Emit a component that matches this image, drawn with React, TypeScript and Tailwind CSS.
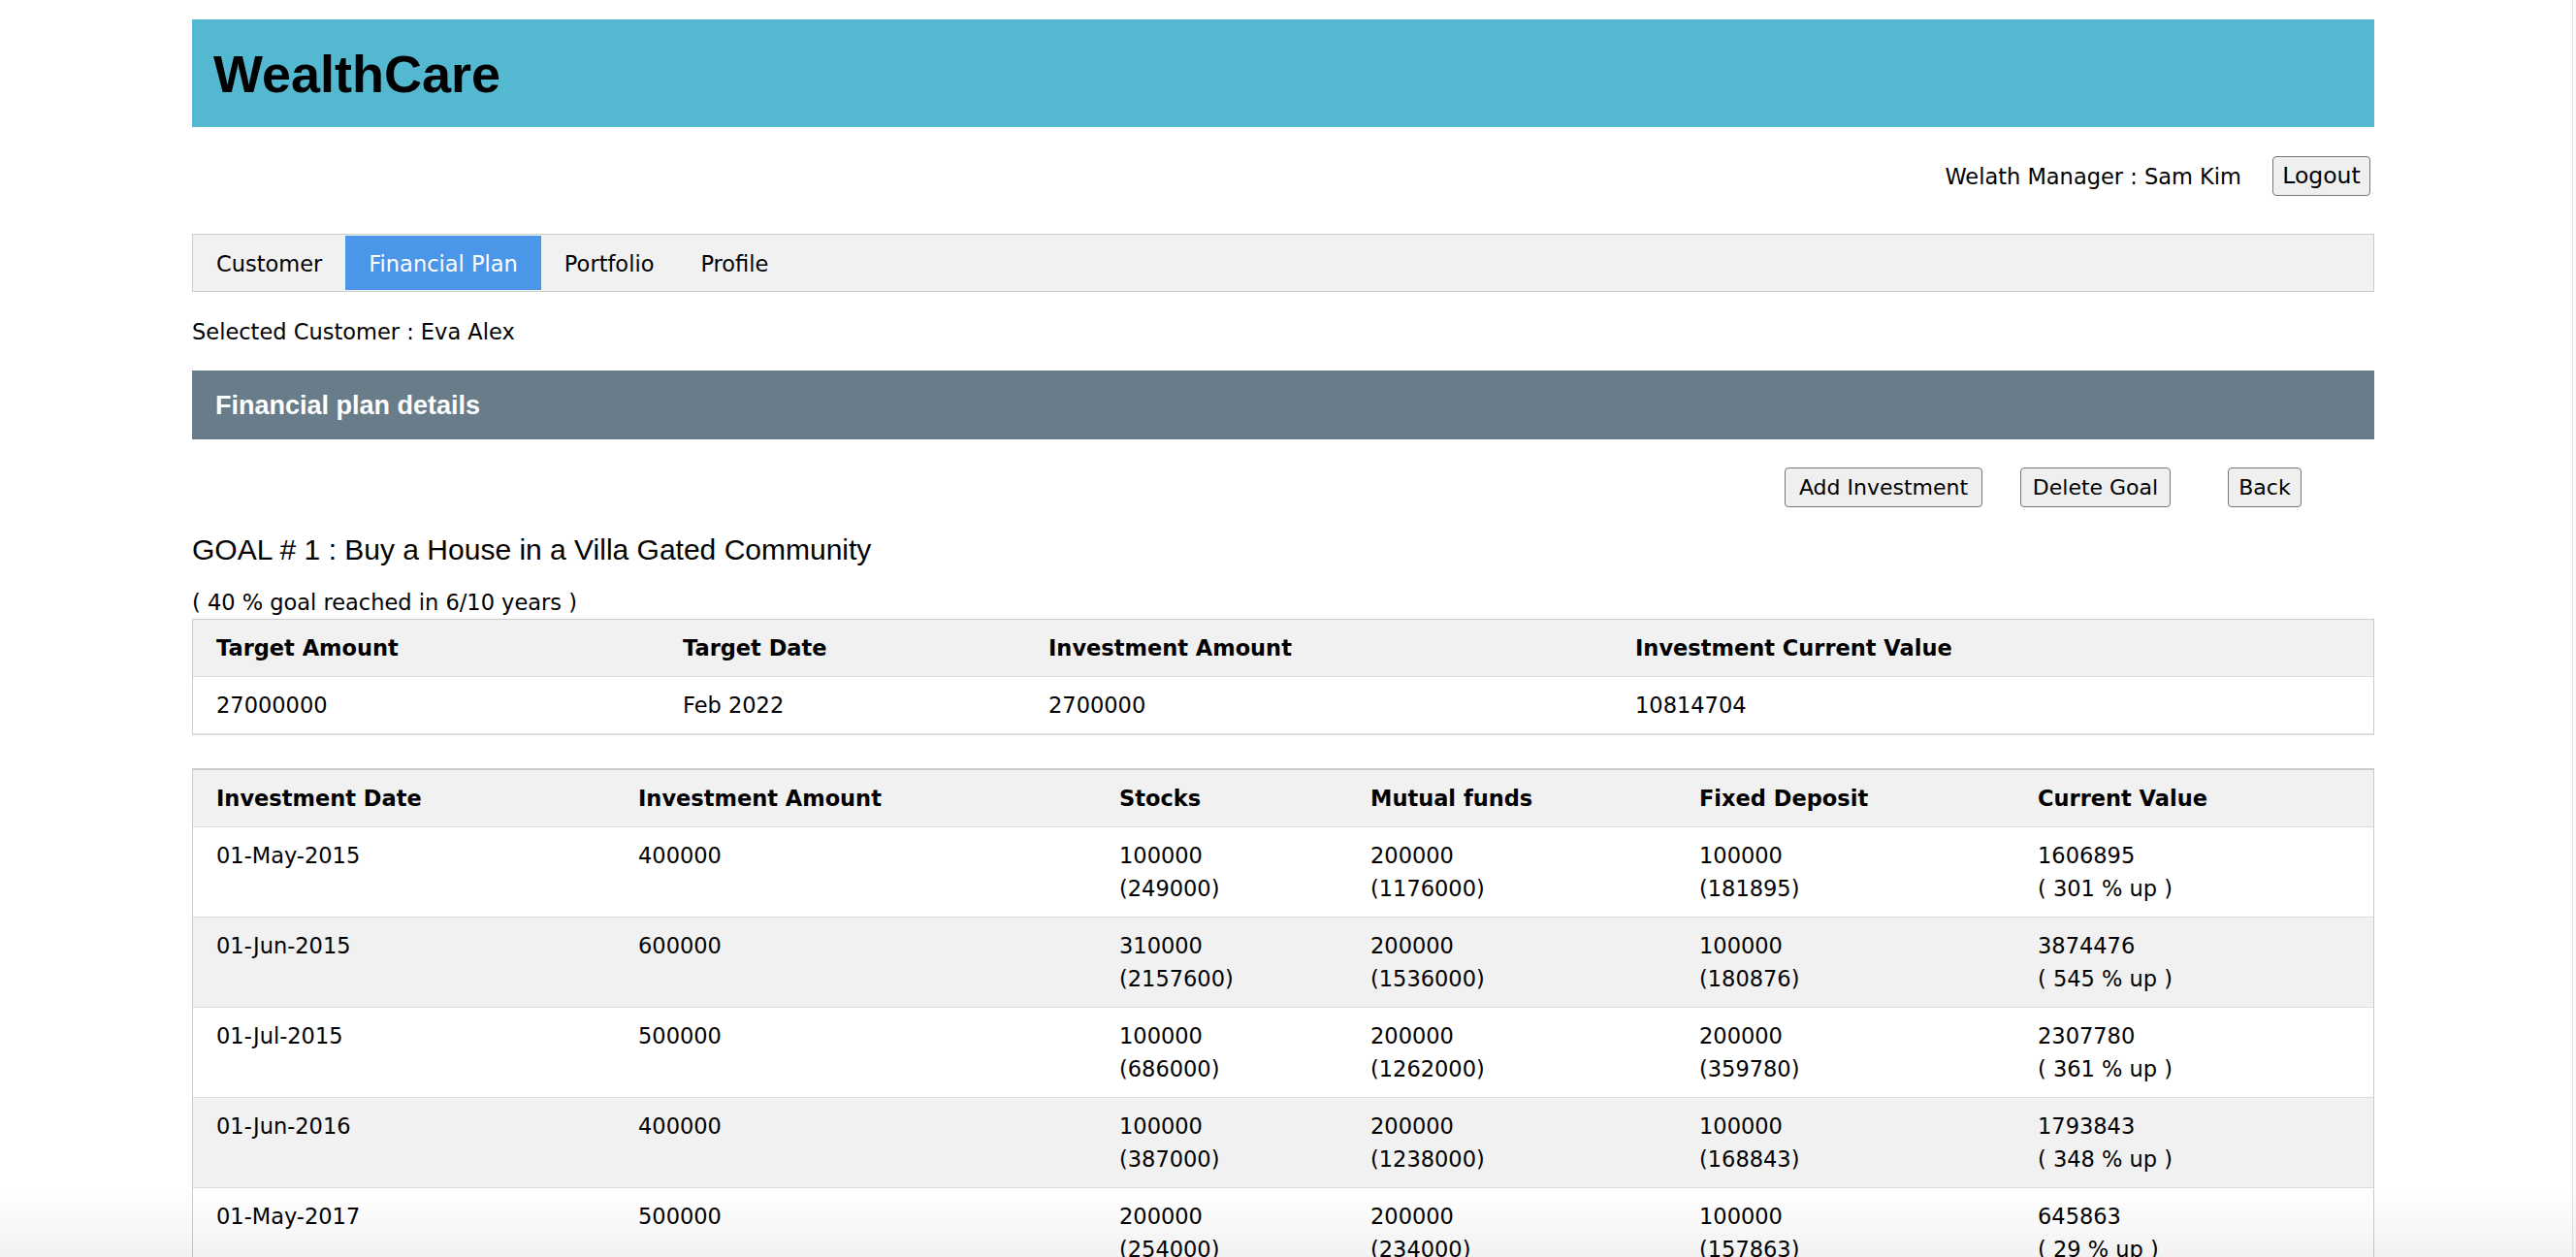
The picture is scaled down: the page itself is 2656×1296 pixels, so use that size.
import React from "react";

const body = "font-['DejaVu_Sans',Verdana,sans-serif]";
const arial = "font-['Liberation_Sans',Arial,sans-serif]";

const rows = [
  ["01-May-2015", "400000", ["100000", "(249000)"], ["200000", "(1176000)"], ["100000", "(181895)"], ["1606895", "( 301 % up )"]],
  ["01-Jun-2015", "600000", ["310000", "(2157600)"], ["200000", "(1536000)"], ["100000", "(180876)"], ["3874476", "( 545 % up )"]],
  ["01-Jul-2015", "500000", ["100000", "(686000)"], ["200000", "(1262000)"], ["200000", "(359780)"], ["2307780", "( 361 % up )"]],
  ["01-Jun-2016", "400000", ["100000", "(387000)"], ["200000", "(1238000)"], ["100000", "(168843)"], ["1793843", "( 348 % up )"]],
  ["01-May-2017", "500000", ["200000", "(254000)"], ["200000", "(234000)"], ["100000", "(157863)"], ["645863", "( 29 % up )"]],
] as const;

function Btn({ children, w, size = "text-[22px]" }: { children: React.ReactNode; w: string; size?: string }) {
  return (
    <button
      className={`${w} h-[41px] rounded-[4px] border border-[#767676] bg-[#efefef] ${size} leading-none text-black ${body}`}
    >
      {children}
    </button>
  );
}

export default function App() {
  return (
    <div className={`relative flex h-[1296px] w-[2656px] overflow-hidden bg-white text-black ${body} text-[22.5px] leading-[34px]`}>
      <div className="w-[2652px] pt-[20px]">
        <div className="ml-[198px] w-[2250px]">
          {/* Header */}
          <div className="flex h-[111px] items-center bg-[#53b8d0] pl-[22px]">
            <h1 className={`${arial} text-[54px] font-bold leading-none text-black`}>WealthCare</h1>
          </div>

          {/* Manager row */}
          <div className="mt-[30px] flex h-[41px] items-center justify-end pr-[4px]">
            <span className="mr-[32px] pt-[1px]">Welath Manager : Sam Kim</span>
            <Btn w="w-[101px]" size="text-[23.5px]">Logout</Btn>
          </div>

          {/* Tabs */}
          <div className="mt-[39px] flex h-[60px] border border-[#cccccc] bg-[#f1f1f1]">
            <div className="flex items-center px-[24px] pt-[2px]">Customer</div>
            <div className="my-[1px] flex items-center bg-[#4a96e8] px-[24px] pt-[2px] text-white">Financial Plan</div>
            <div className="flex items-center px-[24px] pt-[2px]">Portfolio</div>
            <div className="flex items-center px-[24px] pt-[2px]">Profile</div>
          </div>

          <div className="mt-[24px]">Selected Customer : Eva Alex</div>

          {/* Section bar */}
          <div className="mt-[23px] flex h-[71px] items-center bg-[#687c89] pl-[24px]">
            <span className={`${arial} text-[27px] font-bold text-white`}>Financial plan details</span>
          </div>

          {/* Action buttons */}
          <div className="mt-[29px] flex h-[41px] justify-end pr-[75px]">
            <Btn w="w-[204px]">Add Investment</Btn>
            <div className="w-[39px]" />
            <Btn w="w-[155px]">Delete Goal</Btn>
            <div className="w-[59px]" />
            <Btn w="w-[76px]">Back</Btn>
          </div>

          <div className={`${arial} mt-[26px] text-[30px] leading-[36px]`}>
            GOAL # 1 : Buy a House in a Villa Gated Community
          </div>
          <div className="mt-[19px] h-[34px]">( 40 % goal reached in 6/10 years )</div>

          {/* Goal summary table */}
          <div className="border border-b-2 border-[#cccccc] border-b-[#dddddd]">
            <div className="grid grid-cols-[481px_377px_605px_1fr] border-b border-[#dddddd] bg-[#f1f1f1] font-bold">
              {["Target Amount", "Target Date", "Investment Amount", "Investment Current Value"].map((h) => (
                <div key={h} className="py-[12px] pl-[24px]">{h}</div>
              ))}
            </div>
            <div className="grid grid-cols-[481px_377px_605px_1fr] bg-white">
              {["27000000", "Feb 2022", "2700000", "10814704"].map((c) => (
                <div key={c} className="py-[12px] pl-[24px]">{c}</div>
              ))}
            </div>
          </div>

          {/* Investments table */}
          <div className="mt-[34px] border border-t-2 border-[#cccccc]">
            <div className="grid grid-cols-[435px_496px_259px_339px_349px_1fr] border-b border-[#dddddd] bg-[#f1f1f1] font-bold">
              {["Investment Date", "Investment Amount", "Stocks", "Mutual funds", "Fixed Deposit", "Current Value"].map((h) => (
                <div key={h} className="py-[12px] pl-[24px]">{h}</div>
              ))}
            </div>
            {rows.map((r, i) => (
              <div
                key={i}
                className={`grid grid-cols-[435px_496px_259px_339px_349px_1fr] border-b border-[#dddddd] ${i % 2 === 1 ? "bg-[#f1f1f1]" : "bg-white"}`}
              >
                <div className="py-[12px] pl-[24px]">{r[0]}</div>
                <div className="py-[12px] pl-[24px]">{r[1]}</div>
                {[r[2], r[3], r[4], r[5]].map((c, j) => (
                  <div key={j} className="py-[12px] pl-[24px]">
                    <div>{c[0]}</div>
                    <div>{c[1]}</div>
                  </div>
                ))}
              </div>
            ))}
          </div>
        </div>
      </div>
      <div className="w-[4px] border-l border-[#e6e6e6] bg-[#fafafa]" />
      <div className="pointer-events-none absolute inset-x-0 bottom-0 h-[70px] bg-gradient-to-b from-transparent to-[rgba(0,0,0,0.05)]" />
    </div>
  );
}
